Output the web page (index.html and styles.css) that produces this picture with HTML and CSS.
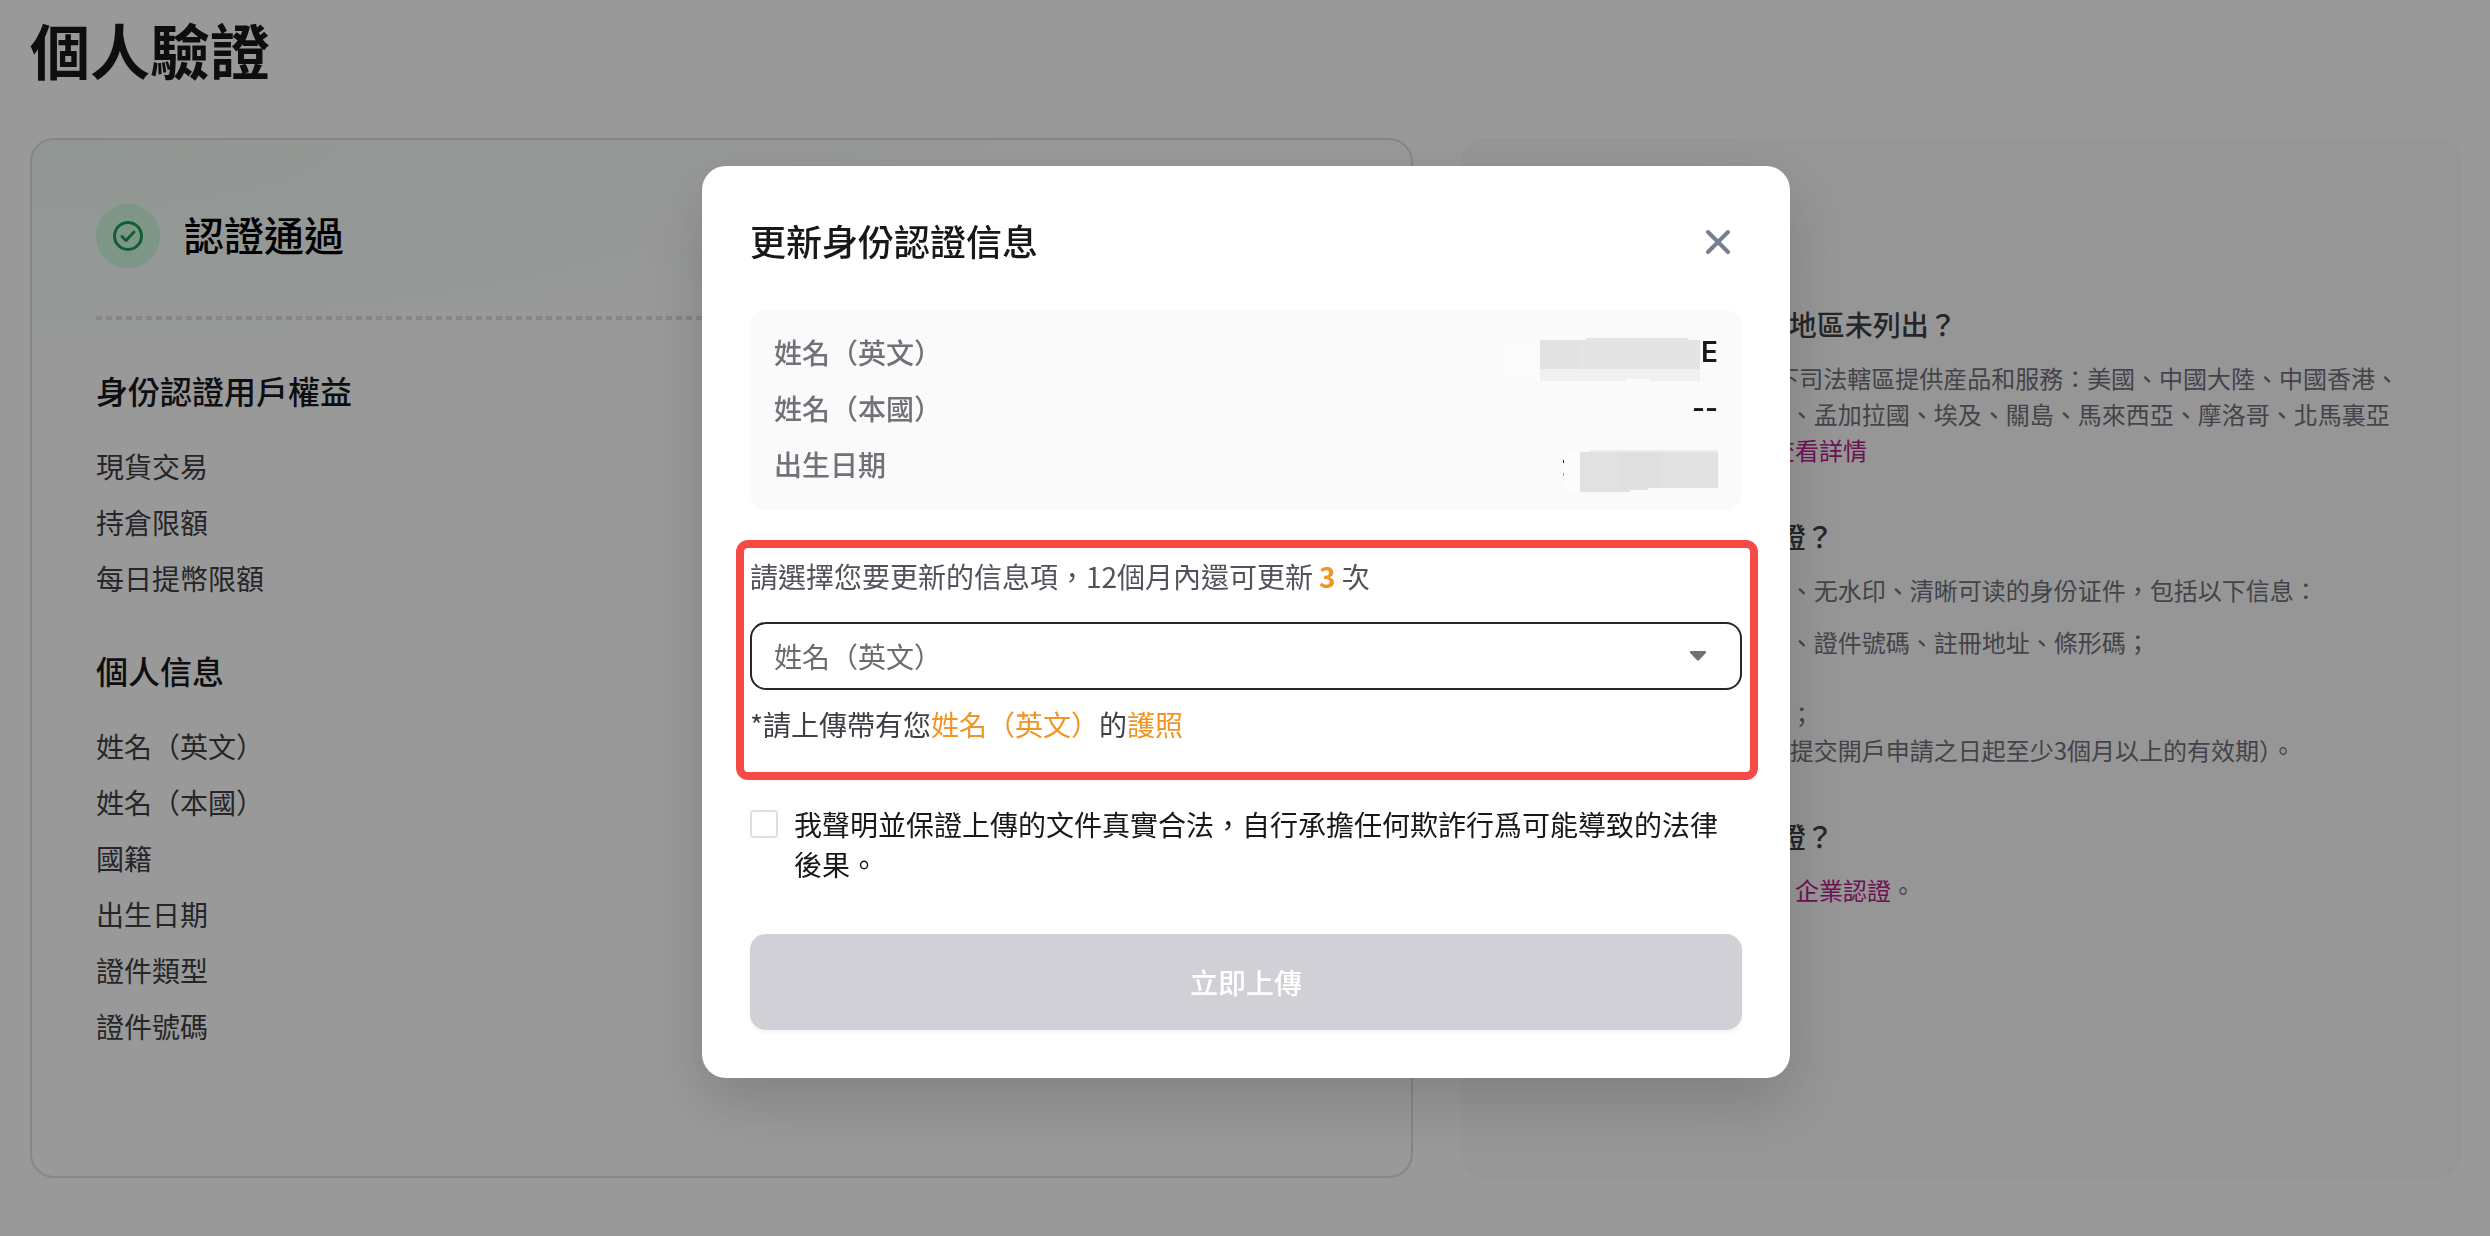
FILE: index.html
```html
<!DOCTYPE html>
<html lang="zh-Hant">

<head>
    <meta charset="UTF-8">
    <meta name="viewport" content="width=device-width, initial-scale=1.0">
    <title>個人驗證</title>
    <link rel="stylesheet" href="styles.css">
</head>

<body>
    <main class="page">
        <h1 class="page-title">個人驗證</h1>
        <div class="columns">
            <section class="card">
                <div class="status">
                    <span class="status-icon">
                        <svg width="32" height="32" viewBox="0 0 32 32" fill="none" stroke="#199e5a" stroke-width="3" stroke-linecap="round" stroke-linejoin="round">
                            <circle cx="16" cy="16" r="13.5" />
                            <path d="M10 16.5l4 4 8-8.5" />
                        </svg>
                    </span>
                    <h2 class="status-title">認證通過</h2>
                </div>
                <div class="divider"></div>
                <h3 class="group-title">身份認證用戶權益</h3>
                <ul class="group-list">
                    <li>現貨交易</li>
                    <li>持倉限額</li>
                    <li>每日提幣限額</li>
                </ul>
                <h3 class="group-title">個人信息</h3>
                <ul class="group-list">
                    <li>姓名（英文）</li>
                    <li>姓名（本國）</li>
                    <li>國籍</li>
                    <li>出生日期</li>
                    <li>證件類型</li>
                    <li>證件號碼</li>
                </ul>
            </section>

            <aside class="faq">
                <h2 class="faq-title">常見問題</h2>
                <section class="faq-item">
                    <h3>爲什麼我所在的國家/地區未列出？</h3>
                    <p>受政策/法規限制不向以下司法轄區提供産品和服務：美國、中國大陸、中國香港、日本、阿富汗、玻利維亞、孟加拉國、埃及、關島、馬來西亞、摩洛哥、北馬裏亞納群島、古巴、伊朗。 <a href="#">查看詳情</a></p>
                </section>
                <section class="faq-item">
                    <h3>如何通過個人身份驗證？</h3>
                    <p>請上傳您本人彩色且真實、无水印、清晰可读的身份证件，包括以下信息：</p>
                    <p>姓名、生日、性別、國籍、證件號碼、註冊地址、條形碼；<br>
                        本人近照；<br>
                        證件正反面彩色照片清晰；<br>
                        身份證件有效期內（須自提交開戶申請之日起至少3個月以上的有效期）。</p>
                </section>
                <section class="faq-item">
                    <h3>如何完成企業身份認證？</h3>
                    <p>請使用企業賬戶登錄完成 <a href="#">企業認證</a>。</p>
                </section>
            </aside>
        </div>
    </main>

    <div class="overlay">
        <form class="modal" role="dialog" aria-labelledby="modal-title">
            <header class="modal-header">
                <h2 class="modal-title" id="modal-title">更新身份認證信息</h2>
                <button type="button" class="close" aria-label="關閉">
                    <svg width="28" height="28" viewBox="0 0 28 28" stroke="#75818f" stroke-width="4" stroke-linecap="round">
                        <path d="M4 4l20 20M24 4L4 24" />
                    </svg>
                </button>
            </header>

            <dl class="info">
                <div class="info-row">
                    <dt>姓名（英文）</dt>
                    <dd>
                        <svg class="mask" width="200" height="40" viewBox="0 0 200 40">
                            <rect x="0" y="8" width="40" height="41" fill="#fbfbfb" />
                            <path d="M40 37h160v12h-50v-2h-24v2H40z" fill="#f0f0f0" />
                            <path d="M40 8h46V6h102v2h12v29H40z" fill="#e4e4e4" />
                            <path d="M40 8h40v29H40z" fill="#e2e2e2" />
                        </svg>
                        <span>E</span>
                    </dd>
                </div>
                <div class="info-row">
                    <dt>姓名（本國）</dt>
                    <dd>--</dd>
                </div>
                <div class="info-row">
                    <dt>出生日期</dt>
                    <dd>
                        <svg class="mask" width="156" height="40" viewBox="0 0 156 40">
                            <rect x="1" y="16" width="1" height="3" fill="#18181b" />
                            <rect x="1" y="29" width="1" height="3" fill="#a1a1aa" />
                            <rect x="2" y="8" width="16" height="40" fill="#fcfcfc" />
                            <path d="M28 6h128v3H28z" fill="#ececec" />
                            <path d="M18 8h138v36H86v2H68v2H18z" fill="#e1e1e1" />
                            <path d="M56 8h40v36H56z" fill="#dfdfdf" />
                        </svg>
                    </dd>
                </div>
            </dl>

            <section class="update">
                <label class="update-label" for="field">請選擇您要更新的信息項，12個月內還可更新<b>3</b>次</label>
                <div class="select-wrap">
                    <select class="select" id="field">
                        <option>姓名（英文）</option>
                        <option>姓名（本國）</option>
                        <option>出生日期</option>
                    </select>
                    <svg class="select-arrow" width="18" height="12" viewBox="0 0 18 12" fill="#71717a">
                        <path d="M2 1h14c1.200 0 1.500 1.200.8 2l-6.600 7c-.7.8-1.700.8-2.400 0l-6.600-7C.5 2.200.8 1 2 1z" />
                    </svg>
                </div>
                <p class="update-hint">*請上傳帶有您<em>姓名（英文）</em>的<em>護照</em></p>
            </section>

            <div class="agree">
                <input type="checkbox" class="checkbox" id="agree">
                <label for="agree">我聲明並保證上傳的文件真實合法，自行承擔任何欺詐行爲可能導致的法律後果。</label>
            </div>

            <button type="submit" class="submit" disabled>立即上傳</button>
        </form>
    </div>
</body>

</html>
```

FILE: styles.css
```css
* {
    box-sizing: border-box;
}

body {
    margin: 0;
    min-height: 100vh;
    font-family: "Noto Sans CJK TC", sans-serif;
    font-size: 28px;
    line-height: 40px;
    color: #3f3f46;
    background-color: #fff;
}

h1,
h2,
h3,
p,
ul,
dl,
dd {
    margin: 0;
    padding: 0;
    font-weight: 500;
}

p {
    font-weight: 400;
}

a {
    color: #b5208c;
    text-decoration: none;
}

/* page */

.page {
    padding: 4px 28px 56px 30px;
}

.page-title {
    margin-bottom: 44px;
    font-size: 60px;
    font-weight: 700;
    line-height: 90px;
    color: #18181b;
}

.columns {
    display: grid;
    grid-template-columns: 58fr 42fr;
    gap: 48px;
}

.card {
    padding: 64px 64px 130px;
    border: 2px solid #e0e0e4;
    border-radius: 24px;
    background: radial-gradient(1000px 240px at 0 0, #f0fbf5, #fff);
}

.status {
    display: flex;
    align-items: center;
    gap: 24px;
}

.status-icon {
    display: flex;
    align-items: center;
    justify-content: center;
    width: 64px;
    height: 64px;
    border-radius: 50%;
    background-color: #d1fadf;
}

.status-title {
    padding-bottom: 4px;
    font-size: 40px;
    line-height: 56px;
    color: #000;
}

.divider {
    height: 4px;
    margin: 48px 0 46px;
    background: repeating-linear-gradient(90deg, #dfdfe4 0 6px, transparent 6px 10px);
}

.group-title {
    margin-bottom: 32px;
    font-size: 32px;
    line-height: 48px;
    color: #18181b;
}

.group-list {
    display: grid;
    gap: 16px;
    list-style: none;
    font-weight: 400;
}

.group-list + .group-title {
    margin-top: 48px;
}

/* faq */

.faq {
    display: flex;
    flex-direction: column;
    gap: 48px;
    padding: 62px 60px 64px 65px;
    border-radius: 24px;
    background-color: #fafafa;
}

.faq-title {
    font-size: 36px;
    line-height: 56px;
}

.faq-item h3 {
    font-size: 28px;
}

.faq-item p {
    margin-top: 16px;
    font-size: 24px;
    line-height: 36px;
    color: #71717a;
}

/* modal */

.overlay {
    position: fixed;
    inset: 0;
    display: flex;
    align-items: center;
    justify-content: center;
    padding: 8px 0 0 2px;
    background-color: rgba(0, 0, 0, 0.4);
}

.modal {
    width: 1088px;
    max-width: 100%;
    padding: 48px;
    border-radius: 24px;
    background-color: #fff;
    box-shadow: 0 24px 64px rgba(0, 0, 0, 0.16);
}

.modal-header {
    display: flex;
    align-items: center;
    justify-content: space-between;
    margin-bottom: 40px;
}

.modal-title {
    padding-bottom: 4px;
    font-size: 36px;
    line-height: 52px;
    color: #18181b;
}

.close {
    display: flex;
    align-items: center;
    justify-content: center;
    width: 48px;
    height: 48px;
    padding: 0;
    border: none;
    background: none;
    cursor: pointer;
}

.info {
    display: grid;
    gap: 16px;
    padding: 22px 24px 26px;
    border-radius: 16px;
    background-color: #fafafa;
}

.info-row {
    display: flex;
    justify-content: space-between;
    color: #71717a;
}

.info-row dd {
    display: flex;
    gap: 1px;
    font-family: Inter, "Noto Sans CJK TC", sans-serif;
    font-weight: 600;
    color: #18181b;
}

.mask {
    overflow: visible;
}

.update {
    margin: 30px -16px 24px -14px;
    padding: 8px;
    padding-left: 6px;
    padding-bottom: 28px;
    border: 8px solid #f54a45;
    border-radius: 12px;
}

.update-label {
    display: block;
    margin-bottom: 26px;
    color: #52525b;
}

.update-label b {
    margin: 0 6px;
    font-weight: 700;
    color: #f29423;
}

.select-wrap {
    position: relative;
    margin-bottom: 14px;
}

.select {
    display: block;
    width: 100%;
    height: 68px;
    padding: 0 22px;
    border: 2px solid #27272a;
    border-radius: 16px;
    background-color: #fff;
    font: inherit;
    color: #6b6b6f;
    appearance: none;
}

.select-arrow {
    position: absolute;
    top: 28px;
    right: 35px;
    pointer-events: none;
}

.update-hint em {
    font-style: normal;
    color: #f29423;
}

.agree {
    display: flex;
    align-items: flex-start;
    gap: 16px;
    margin-bottom: 50px;
    color: #18181b;
}

.checkbox {
    flex: none;
    width: 28px;
    height: 28px;
    margin: 6px 0 0;
    border: 2px solid #dcdfe6;
    border-radius: 4px;
    background-color: #fff;
    appearance: none;
}

.submit {
    display: block;
    width: 100%;
    height: 96px;
    border: none;
    border-radius: 16px;
    background-color: #d1d0d6;
    box-shadow: 0 2px 4px rgba(0, 0, 0, 0.06);
    font: inherit;
    font-weight: 500;
    color: #fff;
}
```
